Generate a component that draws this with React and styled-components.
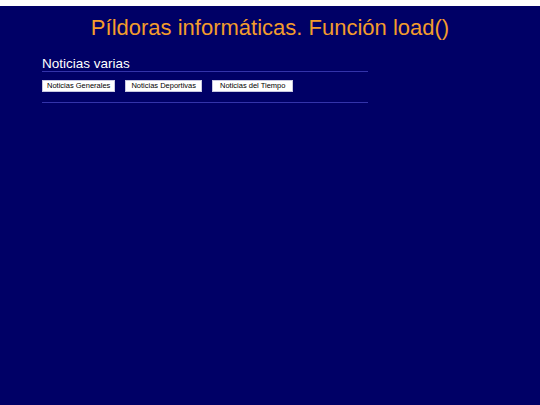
import React from "react";
import styled, { createGlobalStyle } from "styled-components";

const GlobalStyle = createGlobalStyle`
  html, body {
    margin: 0;
    padding: 0;
    background: #ffffff;
  }
  body {
    font-family: "Liberation Sans", Arial, sans-serif;
  }
`;

const Page = styled.div`
  margin-top: 6px;
  min-height: 399px;
  background-color: #000066;
  display: flex;
  flex-direction: column;
`;

const Title = styled.h1`
  margin: 0;
  padding-top: 9px;
  font-weight: normal;
  font-size: 22px;
  line-height: 26px;
  text-align: center;
  color: #f39c2c;
`;

const Section = styled.section`
  width: 326px;
  margin: 16px 0 0 42px;
`;

const SectionTitle = styled.h2`
  margin: 0;
  font-weight: normal;
  font-size: 13.5px;
  line-height: 13px;
  color: #ffffff;
  padding-bottom: 1px;
  border-bottom: 1px solid #3333aa;
`;

const ButtonRow = styled.div`
  display: flex;
  gap: 10px;
  padding: 8px 0 10px;
  border-bottom: 1px solid #3333aa;
`;

const NewsButton = styled.button`
  font-family: "Liberation Sans", Arial, sans-serif;
  font-size: 7.5px;
  height: 12px;
  padding: 0 ${(p) => p.pad || 4}px;
  background: #ffffff;
  color: #000000;
  border: 1px solid #c8c8e0;
  border-radius: 0;
  line-height: 10px;
  cursor: pointer;
`;

export default function App() {
  return (
    <>
      <GlobalStyle />
      <Page>
        <Title>Píldoras informáticas. Función load()</Title>
        <Section>
          <SectionTitle>Noticias varias</SectionTitle>
          <ButtonRow>
            <NewsButton>Noticias Generales</NewsButton>
            <NewsButton pad={5}>Noticias Deportivas</NewsButton>
            <NewsButton pad={7}>Noticias del Tiempo</NewsButton>
          </ButtonRow>
        </Section>
      </Page>
    </>
  );
}
